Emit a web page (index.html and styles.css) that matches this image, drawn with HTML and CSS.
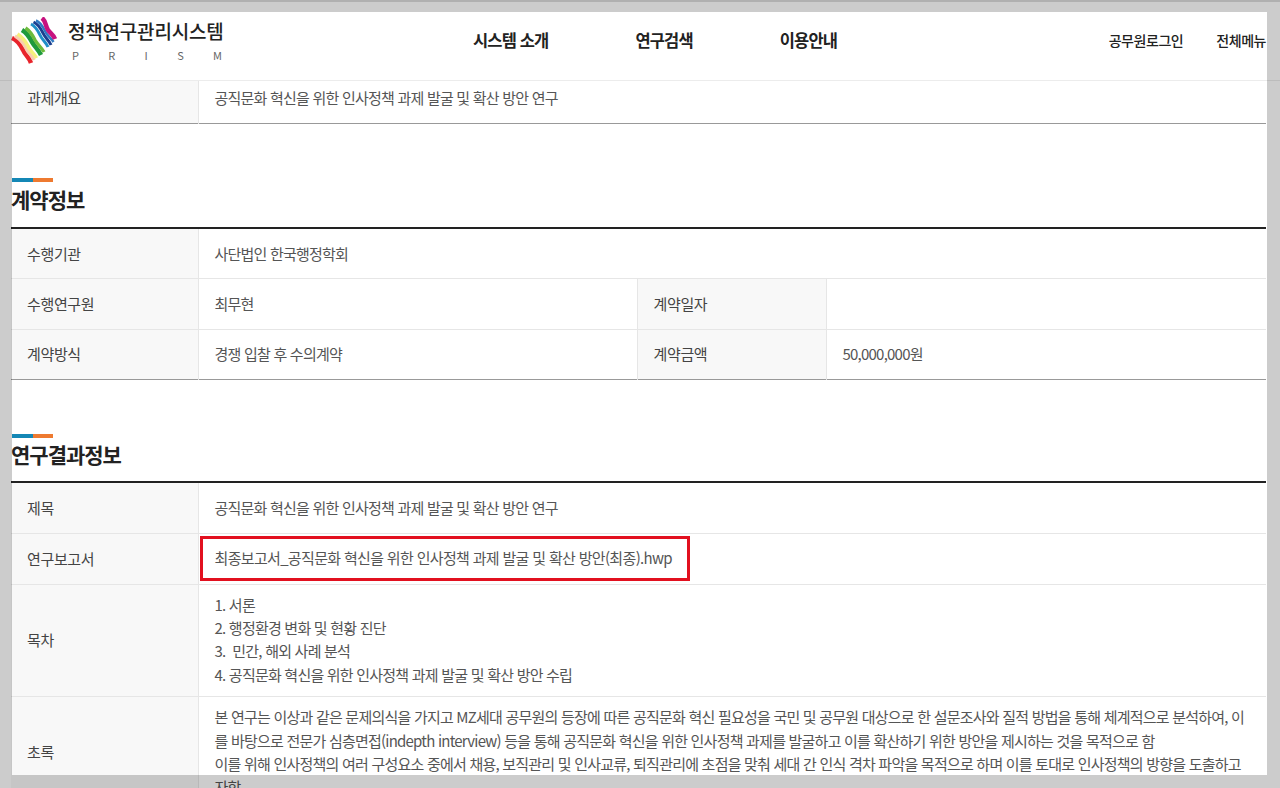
FILE: index.html
```html
<!DOCTYPE html>
<html lang="ko">
<head>
<meta charset="utf-8">
<title>정책연구관리시스템</title>
<link rel="stylesheet" href="styles.css">
</head>
<body>
<header class="site-header">
  <a class="brand">
    <svg class="logo" width="46" height="48" viewBox="0 0 46 48" fill="none" stroke-width="3.4">
      <path stroke="#e8242c" stroke-width="4.500" d="M1 21 C6 23 9 27 12 33 C14 38 18 40 20 46"/>
      <path stroke="#f9cdb0" d="M4 19 C9 22 12 25 15 31 C17 36 21 38 23 43"/>
      <path stroke="#f6ef7c" d="M6.500 17 C11 20 14 23 17 29 C19 34 23 36 25.500 41"/>
      <path stroke="#1f9a3c" stroke-width="4.500" d="M11 13 C16 16 18 19 21 25 C24 30 27 32 30 38"/>
      <path stroke="#6cbb3c" d="M14.500 11 C19 14 21 17 24 23 C27 28 30 30 33 35"/>
      <path stroke="#1f8fc8" stroke-width="3" d="M20 7 C24 9 26 12 29 18 C31 23 35 25 37 30"/>
      <path stroke="#1b3f8f" stroke-width="3" d="M22.500 5 C27 7 29 10 32 16 C34 21 38 23 40 28"/>
      <path stroke="#2f79c2" stroke-width="2.500" d="M25 3.500 C29 5 31 8 34 14 C36 19 40 21 42.500 25"/>
      <path stroke="#c7127f" stroke-width="4.500" d="M31 1 C35 4 34 8 37 13 C39 16 42 17 44 22"/>
    </svg>
    <span class="brand-text">
      <strong class="brand-name">정책연구관리시스템</strong>
      <span class="brand-sub"><i>P</i><i>R</i><i>I</i><i>S</i><i>M</i></span>
    </span>
  </a>
  <nav class="main-nav">
    <a>시스템 소개</a>
    <a>연구검색</a>
    <a>이용안내</a>
  </nav>
  <div class="util-nav">
    <a>공무원로그인</a>
    <a>전체메뉴</a>
  </div>
</header>

<main class="content">
  <table class="info info-first">
    <colgroup><col class="c-th"><col class="c-td"><col class="c-th2"><col></colgroup>
    <tr class="row-short"><th>과제개요</th><td colspan="3">공직문화 혁신을 위한 인사정책 과제 발굴 및 확산 방안 연구</td></tr>
  </table>

  <h2 class="section-title">계약정보</h2>
  <table class="info">
    <colgroup><col class="c-th"><col class="c-td"><col class="c-th2"><col></colgroup>
    <tr class="row-tall"><th>수행기관</th><td colspan="3">사단법인 한국행정학회</td></tr>
    <tr class="row-tall"><th>수행연구원</th><td>최무현</td><th>계약일자</th><td></td></tr>
    <tr class="row-up"><th>계약방식</th><td>경쟁 입찰 후 수의계약</td><th>계약금액</th><td>50,000,000원</td></tr>
  </table>

  <h2 class="section-title section-title-next">연구결과정보</h2>
  <table class="info">
    <colgroup><col class="c-th"><col class="c-td"><col class="c-th2"><col></colgroup>
    <tr class="row-tall"><th>제목</th><td colspan="3">공직문화 혁신을 위한 인사정책 과제 발굴 및 확산 방안 연구</td></tr>
    <tr class="row-tall"><th>연구보고서</th><td colspan="3" class="file-cell"><span class="file-mark">최종보고서_공직문화 혁신을 위한 인사정책 과제 발굴 및 확산 방안(최종).hwp</span></td></tr>
    <tr class="row-up"><th>목차</th><td colspan="3" class="multi">1. 서론<br>2. 행정환경 변화 및 현황 진단<br>3.&nbsp; 민간, 해외 사례 분석<br>4. 공직문화 혁신을 위한 인사정책 과제 발굴 및 확산 방안 수립</td></tr>
    <tr class="row-up"><th>초록</th><td colspan="3" class="multi">본 연구는 이상과 같은 문제의식을 가지고 MZ세대 공무원의 등장에 따른 공직문화 혁신 필요성을 국민 및 공무원 대상으로 한 설문조사와 질적 방법을 통해 체계적으로 분석하여, 이<br>를 바탕으로 전문가 심층면접(indepth interview) 등을 통해 공직문화 혁신을 위한 인사정책 과제를 발굴하고 이를 확산하기 위한 방안을 제시하는 것을 목적으로 함<br>이를 위해 인사정책의 여러 구성요소 중에서 채용, 보직관리 및 인사교류, 퇴직관리에 초점을 맞춰 세대 간 인식 격차 파악을 목적으로 하며 이를 토대로 인사정책의 방향을 도출하고<br>자함</td></tr>
  </table>
</main>

<div class="dim-frame" aria-hidden="true"></div>
</body>
</html>
```

FILE: styles.css
```css
* { box-sizing: border-box; }
html, body { margin: 0; height: 788px; overflow: hidden; background: #fff; }
body {
  font-family: "Noto Sans CJK KR", "Noto Sans", sans-serif;
  color: #555;
  font-size: 15px;
  letter-spacing: -0.78px;
}
.site-header {
  height: 81px;
  border-bottom: 1px solid #ececec;
  display: flex;
  align-items: flex-start;
  padding: 0 14px 0 11px;
  color: #222;
}
.brand { display: flex; align-items: flex-start; width: 462px; padding-top: 17px; }
.logo { display: block; flex: none; margin-right: 11px; }
.brand-text { display: flex; flex-direction: column; width: 156px; }
.brand-name { font-size: 19px; font-weight: 500; line-height: 28px; letter-spacing: -0.2px; color: #222; white-space: nowrap; }
.brand-sub { display: flex; justify-content: space-between; padding: 0 2px 0 4px; margin-top: 2px; font-size: 11px; line-height: 16px; color: #666; letter-spacing: 0; }
.brand-sub i { font-style: normal; }
.main-nav { display: flex; gap: 87px; padding-top: 28px; font-size: 16.5px; line-height: 24px; font-weight: 700; letter-spacing: -0.85px; width: 635px; }
.util-nav { display: flex; gap: 33px; padding-top: 30px; font-size: 14px; line-height: 20px; font-weight: 500; letter-spacing: -0.45px; margin-left: auto; white-space: nowrap; }
.content { padding: 0 14px 0 11px; }
.info { width: 100%; border-collapse: collapse; table-layout: fixed; border-top: 2px solid #222; border-bottom: 1px solid #999; }
.info-first { border-top: 0; }
.c-th { width: 187px; }
.c-td { width: 439px; }
.c-th2 { width: 189px; }
.info tr { height: 50px; }
.info .row-tall { height: 51px; }
.info th, .info td { border-bottom: 1px solid #e6e6e6; border-right: 1px solid #e6e6e6; padding: 0 16px; vertical-align: middle; text-align: left; font-size: 15px; line-height: 23.4px; }
.info tr > :last-child { border-right: 0; }
.info tr:last-child > * { border-bottom: 0; }
.info th { background: #f8f8f8; font-weight: 400; color: #444; letter-spacing: -0.35px; }
.info .row-short { height: 42px; }
.info .row-short > * { padding-bottom: 8px; }
.info .row-up > * { padding-bottom: 2px; }
.info .multi, .info .row-up > .multi { padding-top: 8px; padding-bottom: 10px; }
.info .file-cell { padding: 0 0 0 1px; letter-spacing: -0.67px; }
.file-mark { display: inline-block; border: 3px solid #e2101f; padding: 0 15px 0 12px; height: 45px; line-height: 38px; vertical-align: middle; white-space: nowrap; }
.section-title { margin: 0; padding: 54px 0 0; height: 103px; font-size: 21px; line-height: 32px; font-weight: 700; color: #222; letter-spacing: -1px; }
.section-title-next { height: 101px; }
.section-title::before { content: ""; display: block; height: 4px; width: 41px; margin: 0 0 1px 1px; background: linear-gradient(90deg, #1487b5 50%, #ee7a30 50%); }
.section-title-next::before { margin-bottom: 0; }
.dim-frame { position: fixed; left: 12px; top: 12px; right: 13px; bottom: 13px; box-shadow: 0 0 0 40px rgba(0,0,0,0.2); pointer-events: none; }
.dim-frame::before { content: ""; position: absolute; left: -12px; right: -13px; top: -12px; height: 2px; background: rgba(0,0,0,0.14); }
```
